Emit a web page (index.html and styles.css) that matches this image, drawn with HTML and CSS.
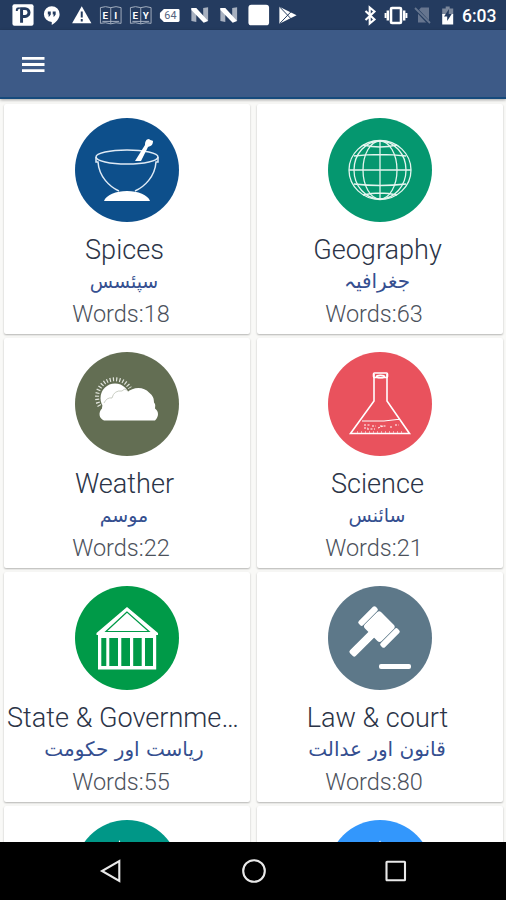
FILE: index.html
```html
<!DOCTYPE html>
<html lang="en">
<head>
<meta charset="utf-8">
<title>Categories</title>
<link rel="stylesheet" href="styles.css">
</head>
<body>
<div class="screen">
  <div class="status">
    <div class="notifications">
      <svg class="note" viewBox="0 0 30 30"><rect x="4.5" y="4" width="21.5" height="22" rx="2" fill="#fff"/><g fill="none" stroke="#243b5f" stroke-width="3"><path d="M13.8 23V8.5h3.6a4 4 0 0 1 0 8h-3"/><path d="M9 11V9.5q0-1.500 3-1.500" stroke-width="2"/></g></svg>
      <svg class="note" viewBox="0 0 30 30"><path d="M15 6a8 8 0 0 1 8 8.200c0 4.500-4 8.500-8 11v-3.200a8 8 0 0 1 0-16z" fill="#fff"/><path d="M11 11.500h3v3l-1.500 2h-1l.6-2H11zM16 11.500h3v3l-1.500 2h-1l.6-2H16z" fill="#243b5f"/></svg>
      <svg class="note" viewBox="0 0 30 30"><path d="M15 6l9.800 17.500H5.200z" fill="#fff"/><path d="M15 11.500v6M15 19v2.500" stroke="#243b5f" stroke-width="2"/></svg>
      <svg class="note book" viewBox="0 0 30 30"><path d="M4.500 7.500q5-2 10.500 0 5.500-2 10.500 0v16q-5-1.500-10.500.500-5.500-2-10.500-.500zM15 7.500v16.500M6.500 21.500h17"/><text x="6.500" y="19">E</text><text x="18.500" y="19">I</text></svg>
      <svg class="note book" viewBox="0 0 30 30"><path d="M4.500 7.500q5-2 10.500 0 5.500-2 10.500 0v16q-5-1.500-10.500.500-5.500-2-10.500-.500zM15 7.500v16.500M6.500 21.500h17"/><text x="6.500" y="19">E</text><text x="17" y="19">Y</text></svg>
      <svg class="note" viewBox="0 0 30 30"><path d="M9 9h14.500q1.500 0 1.500 1.500v10q0 1.500-1.500 1.500H9l-4-4v-5z" fill="#fff"/><text class="count" x="9.500" y="19">64</text></svg>
      <svg class="note" viewBox="0 0 30 30"><path d="M6.500 8l5 1v13l-5-1zM18.500 8l5-1v14l-5-2z" fill="#a7b0bf"/><path d="M6.500 8l5 0 12 13-4.500 2L6.500 10z" fill="#fff"/></svg>
      <svg class="note" viewBox="0 0 30 30"><path d="M6.500 8l5 1v13l-5-1zM18.500 8l5-1v14l-5-2z" fill="#a7b0bf"/><path d="M6.500 8l5 0 12 13-4.500 2L6.500 10z" fill="#fff"/></svg>
      <svg class="note" viewBox="0 0 30 30"><rect x="4.500" y="4.500" width="21" height="21" rx="3" fill="#fff"/></svg>
      <svg class="note" viewBox="0 0 30 30"><path d="M6.500 6.500L24 15.300 6.500 24z" fill="#fff"/><path d="M7 7l11.500 12M7 23.500l11.500-12" stroke="#243b5f" stroke-width="1"/></svg>
    </div>
    <div class="system">
      <svg class="sys" viewBox="0 0 26 30"><path d="M8.500 11l9 8.500-4.800 4V7.500l4.800 4-9 8.500" fill="none" stroke="#fff" stroke-width="2.100"/></svg>
      <svg class="sys" viewBox="0 0 26 30"><rect x="8" y="8" width="10" height="15" rx="1" fill="none" stroke="#fff" stroke-width="2.600"/><path d="M4.800 10.500v10M21.200 10.500v10" stroke="#fff" stroke-width="2.400"/><path d="M2.600 13v5M23.400 13v5" stroke="#fff" stroke-width="2"/></svg>
      <svg class="sys" viewBox="0 0 26 30"><path d="M12 7.500h8v15h-11V11z" fill="#66758f"/><path d="M6 8l15 16" stroke="#243b5f" stroke-width="3.500"/><path d="M6 8l15 15" stroke="#66758f" stroke-width="1.800"/></svg>
      <svg class="sys" viewBox="0 0 26 30"><path d="M7.200 8.500h3.500v-2h4v2h3.500v6h-11z" fill="#7b879b"/><path d="M7.200 14h11v10.500h-11z" fill="#fff"/><path d="M14 9l-5 7.500h3.200V21l4.500-7h-3z" fill="#243b5f"/></svg>
      <span class="clock">6:03</span>
    </div>
  </div>
  <div class="toolbar">
    <svg class="menu" viewBox="0 0 24 22"><path d="M1 4.300h22.500M1 10.500h22.500M1 16.700h22.500" stroke="#fff" stroke-width="2.800"/></svg>
  </div>
  <div class="grid">
    <div class="card">
      <svg class="badge spices" viewBox="0 0 104 104"><g fill="none" stroke="#dfeaf5" stroke-width="1.500"><ellipse cx="52" cy="39" rx="31" ry="7"/><path d="M21 39v5h2c1 15 12 25 21 29M83 39v5h-2c-1 15-12 25-21 29"/></g><path d="M29 83c2-6 12-10 23-10s21 4 23 10z" fill="#fff"/><path d="M60 43l10-16c0-3 1-6 4-6 1 1 3 1.500 4 2 0 4-2 5-5 6l-7 14z" fill="#fff"/></svg>
      <div class="title">Spices</div><div class="urdu" lang="ur" dir="rtl">سپئسس</div><div class="words">Words:18</div>
    </div>
    <div class="card">
      <svg class="badge geography" viewBox="0 0 104 104"><g fill="none" stroke="#e4f5ef" stroke-width="1.300"><ellipse cx="52" cy="52" rx="31" ry="29.500"/><ellipse cx="52" cy="52" rx="26" ry="29"/><ellipse cx="52" cy="52" rx="17" ry="29"/><path d="M52 22.500v59M21 52h62M35 27q17 4 34 0M26 38q26-3 52 0M26 66q26 3 52 0M35 77q17-4 34 0"/></g></svg>
      <div class="title">Geography</div><div class="urdu wide" lang="ur" dir="rtl">جغرافیہ</div><div class="words">Words:63</div>
    </div>
    <div class="card">
      <svg class="badge weather" viewBox="0 0 104 104"><circle cx="40" cy="46" r="14.500" fill="#fff"/><path d="M24.500 54A17.500 17.500 0 1 1 55 36" fill="none" stroke="#e2e5dd" stroke-width="4" stroke-dasharray="1.200 2"/><path d="M29 68.500c-5-2-6-8-2-12 0-4 2-6 6-6 1-5 5-6 8-5 3-4 7-6 11-5 6-6 17-6 22 0 4 3 5 6 5 10 2 2 1 4 1 6 4 3 4 8 0 12z" fill="#fff"/><path d="M29 51q3-6 8-5 2-8 10-7 2-3 5-1" fill="none" stroke="#bcc2b5" stroke-width=".8"/></svg>
      <div class="title">Weather</div><div class="urdu" lang="ur" dir="rtl">موسم</div><div class="words">Words:22</div>
    </div>
    <div class="card">
      <svg class="badge science" viewBox="0 0 104 104"><g fill="none" stroke="#fff" stroke-width="1.600"><path d="M46 22v27L22.500 81.500h59L59 49V22"/><rect x="45.500" y="21" width="14" height="4.500" rx="1"/><ellipse cx="52.500" cy="24.500" rx="4" ry="1.200"/><path d="M34 69h22l13-1.500h3" stroke-width="1"/><path d="M36 73h6M44 74h4M52 74h7M62 75h3M67 73h4M36 76h4M39 77h8M50 76l5-2" stroke-width="1" stroke-dasharray="2 1.500"/><path d="M29 80h46" stroke-width="1" stroke-dasharray="1 3"/></g></svg>
      <div class="title">Science</div><div class="urdu" lang="ur" dir="rtl">سائنس</div><div class="words">Words:21</div>
    </div>
    <div class="card">
      <svg class="badge state" viewBox="0 0 104 104"><path fill-rule="evenodd" d="M52 21l31 26v2h-1.800v34.500H23V49h-1.500v-2zM26.300 52v28h5V52zM34.300 52v28H43V52zM46.300 52v28H55V52zM58.200 52v28h8.500V52zM70 52v28h8V52z" fill="#fff"/><path d="M52 26L31 45.500h43z" fill="#fff" stroke="#009a48" stroke-width="1.200"/></svg>
      <div class="title">State &amp; Government</div><div class="urdu wide" lang="ur" dir="rtl">ریاست اور حکومت</div><div class="words">Words:55</div>
    </div>
    <div class="card">
      <svg class="badge law" viewBox="0 0 104 104"><g fill="#fff"><g transform="translate(51 41) rotate(45)"><rect x="-18.500" y="-12" width="6" height="24" rx="2"/><rect x="-11.800" y="-12" width="23.600" height="23" rx="3"/><rect x="12.500" y="-12" width="6" height="24" rx="2"/><rect x="-4" y="8" width="8" height="31" rx="2"/></g><rect x="51" y="78" width="32" height="5" rx="2"/></g></svg>
      <div class="title">Law &amp; court</div><div class="urdu wide" lang="ur" dir="rtl">قانون اور عدالت</div><div class="words">Words:80</div>
    </div>
    <div class="card">
      <svg class="badge teal" viewBox="0 0 104 104"><path d="M43 24l1.500-4 1.500 4z" fill="#fff"/></svg>
    </div>
    <div class="card">
      <svg class="badge blue" viewBox="0 0 104 104"><path d="M50 24l2-3.500 2 3.500z" fill="#fff"/></svg>
    </div>
  </div>
  <div class="navbar">
    <svg class="nav" viewBox="0 0 28 28"><path d="M21.300 4v20L4 14z"/></svg>
    <svg class="nav" viewBox="0 0 28 28"><circle cx="14" cy="14" r="10.800"/></svg>
    <svg class="nav" viewBox="0 0 28 28"><rect x="4.500" y="4.800" width="18.500" height="18.500" rx=".5"/></svg>
  </div>
</div>
</body>
</html>
```
FILE: styles.css
```css
* { box-sizing: border-box; }
body { margin: 0; font-family: Roboto, "DejaVu Sans", sans-serif; }
.screen { display: flex; flex-direction: column; width: 506px; height: 900px; overflow: hidden; background: #f9f9f7; }
.status { display: flex; justify-content: space-between; height: 30px; flex: none; padding-left: 7.5px; background: #243b5f; }
.notifications, .system { display: flex; }
.note { width: 29.5px; height: 30px; }
.book path { fill: none; stroke: #a3aebf; stroke-width: 1; }
.book text { fill: #fff; font: bold 10px Roboto, sans-serif; }
.count { fill: #53647f; font: 11px Roboto, sans-serif; }
.sys { width: 26px; height: 30px; }
.clock { width: 45px; padding-left: 1px; color: #fff; font-size: 17.5px; font-weight: 500; line-height: 32px; }
.toolbar { display: flex; align-items: center; height: 69px; flex: none; padding: 0 0 0 20.500px; background: #3d5a87; border-bottom: 2px solid #164a7c; box-shadow: 0 1px 3px rgba(0, 0, 0, .35); z-index: 1; }
.menu { width: 24px; height: 22px; margin-top: 2px; }
.grid { display: grid; grid-template-columns: 246px 246px; grid-auto-rows: 230px; gap: 4px 7px; flex: 1; min-height: 0; padding: 5px 0 0 4px; overflow: hidden; }
.card { display: flex; flex-direction: column; align-items: center; min-width: 0; padding-top: 14px; background: #fff; border-radius: 2px; box-shadow: 0 1px 2px rgba(0, 0, 0, .28); }
.badge { display: block; width: 104px; height: 104px; flex: none; border-radius: 50%; }
.spices { background: #0d4f8b; }
.geography { background: #05976f; }
.weather { background: #636e53; }
.science { background: #e9525d; }
.state { background: #009a48; }
.law { background: #5d7889; }
.teal { background: #009787; }
.blue { background: #3397fc; }
.title { width: 246px; height: 36px; margin-top: 10px; padding: 0 8px 0 3px; overflow: hidden; color: #2b3447; font-size: 27.1px; font-weight: 300; line-height: 36px; text-align: center; text-overflow: ellipsis; white-space: nowrap; }
.urdu { width: 240px; height: 26px; margin-right: 6px; color: #354f90; font-family: "DejaVu Sans", sans-serif; font-size: 19px; line-height: 26px; text-align: center; white-space: nowrap; }
.wide { font-size: 20px; }
.words { margin-top: 2px; margin-right: 12px; color: #4c525c; font-size: 23.500px; font-weight: 300; line-height: 36px; }
.navbar { display: flex; justify-content: center; gap: 114px; height: 58px; flex: none; padding: 15px 0 0 2px; background: #000; }
.nav { width: 28px; height: 28px; fill: none; stroke: #e9e9e9; stroke-width: 2.100; }
```
